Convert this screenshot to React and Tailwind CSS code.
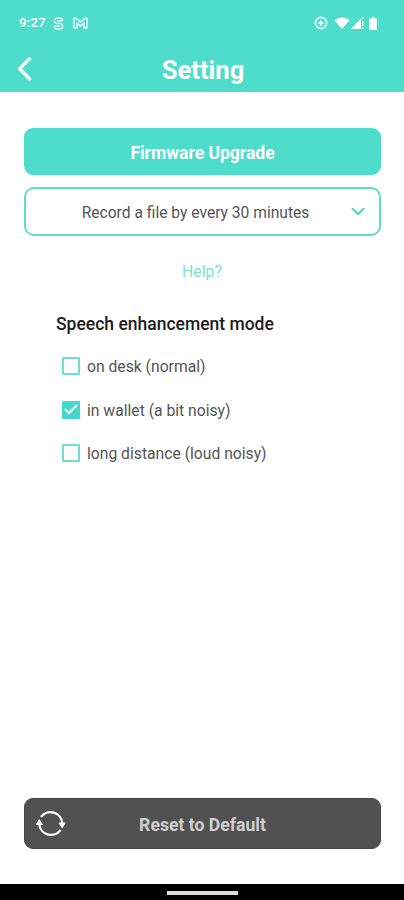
import React, { useState } from 'react';

const MODES = [
  { id: 'desk', label: 'on desk (normal)' },
  { id: 'wallet', label: 'in wallet (a bit noisy)' },
  { id: 'distance', label: 'long distance (loud noisy)' },
];

const StatusBar = () => (
  <div className="flex h-[46px] items-center justify-between pl-[19px] pr-[26px] text-white">
    <div className="flex items-center">
      <span className="w-[27px] whitespace-nowrap text-[13.5px] leading-none font-medium">9:27</span>
      <svg className="ml-[7px]" width="11" height="13" viewBox="0 0 11 13" fill="none" stroke="currentColor" strokeWidth="1.5" opacity="0.8">
        <path d="M9.500 4V3.500A2.500 2.500 0 0 0 7 1H4a2.500 2.500 0 0 0-2.500 2.500v.5A2.500 2.500 0 0 0 4 6.500h3A2.500 2.500 0 0 1 9.500 9v.5A2.500 2.500 0 0 1 7 12H4a2.500 2.500 0 0 1-2.500-2.500V9" />
        <path d="M4 4h5.500M1.500 9H7" strokeWidth="1.300" />
      </svg>
      <svg className="ml-[9px]" width="15" height="12" viewBox="0 0 15 12" fill="none" stroke="currentColor" strokeWidth="1.7" opacity="0.8">
        <path d="M1 10.800V1.400h2L7.500 5 12 1.400h2v9.400h-3V6.200L7.500 9 4 6.200v4.600z" strokeLinejoin="round" />
      </svg>
    </div>
    <div className="flex items-center">
      <svg className="mr-px" width="14" height="14" viewBox="0 0 14 14" fill="none" stroke="currentColor">
        <circle cx="7" cy="7" r="5.600" strokeWidth="1.700" opacity="0.85" />
        <path d="M7 4.300v5.400M4.300 7h5.400" strokeWidth="1.700" />
      </svg>
      <svg className="ml-[5px]" width="16" height="12" viewBox="0 0 16 12" fill="currentColor">
        <path d="M.5 3.200C4.800-.4 11.200-.4 15.500 3.200L8 12z" />
      </svg>
      <svg className="ml-px" width="13" height="12" viewBox="0 0 13 12" fill="currentColor">
        <path d="M0 12 10 1.500V12z" />
        <path d="M11 0h2v2h-2zM11 4h1.500v5H11zM11 10h1.500v2H11z" opacity="0.8" />
      </svg>
      <svg className="mr-px ml-[5px]" width="8" height="13" viewBox="0 0 8 13" fill="currentColor">
        <path d="M2.500 0h3v1.500H7a1 1 0 0 1 1 1V12a1 1 0 0 1-1 1H1a1 1 0 0 1-1-1V2.500a1 1 0 0 1 1-1h1.500z" />
      </svg>
    </div>
  </div>
);

const Header = () => (
  <header className="h-[92px] bg-[#4eddca]">
    <StatusBar />
    <div className="grid h-[46px] grid-cols-[60px_1fr_60px] items-center text-white">
      <button aria-label="Back" className="pl-[17px]">
        <svg width="16" height="24" viewBox="0 0 16 24" fill="none" stroke="currentColor" strokeWidth="3.4" strokeLinecap="round" strokeLinejoin="round">
          <path d="M12.500 1.900 2.600 11.700l9.900 10.100" />
        </svg>
      </button>
      <h1 className="pt-[3px] pl-0.5 text-center text-[25.6px] leading-none font-bold">Setting</h1>
    </div>
  </header>
);

const ModeOption = ({ label, checked, onToggle }) => (
  <button role="checkbox" aria-checked={checked} onClick={onToggle} className="flex h-[18px] items-center text-left">
    <span className={`flex size-[18px] items-center justify-center rounded-[1px] border-2 ${checked ? 'border-[#40d9cb] bg-[#40d9cb]' : 'border-[#6fdfcf] bg-white'}`}>
      {checked && (
        <svg className="shrink-0" width="14" height="11" viewBox="0 0 14 11" fill="none" stroke="white" strokeWidth="2">
          <path d="M1 5.200 4.900 9 13 1" />
        </svg>
      )}
    </span>
    <span className="ml-[7px] pt-0.5 whitespace-nowrap text-[15.7px] text-[#555]">{label}</span>
  </button>
);

const App = () => {
  const [mode, setMode] = useState('wallet');

  return (
    <div className="flex h-screen flex-col bg-white font-['Roboto',sans-serif]">
      <Header />

      <main className="flex flex-1 flex-col px-6 pt-[36px] pb-[35px]">
        <button className="mr-[-1px] h-[47px] rounded-[9px] bg-[#4eddca] pt-[3px] text-[17.5px] font-bold text-white">
          Firmware Upgrade
        </button>

        <button className="mt-3 mr-[-1px] grid h-[49px] grid-cols-[42px_1fr_56px] items-center rounded-[10px] border-2 border-[#62dcc6] bg-white text-[15.6px] text-[#555]">
          <span className="col-start-2 pt-1 whitespace-nowrap">Record a file by every 30 minutes</span>
          <svg className="ml-[28px]" width="14" height="9" viewBox="0 0 14 9" fill="none" stroke="#3fd6b8" strokeWidth="1.8">
            <path d="M1 1.200 7 7.200 13 1.200" />
          </svg>
        </button>

        <button className="mt-6 self-center text-[15.8px] leading-6 text-[#7ce3d3]">Help?</button>

        <section className="mt-[28px] pl-8">
          <h2 className="text-[17.5px] leading-6 font-medium text-[#1c1c1c]">Speech enhancement mode</h2>
          <div className="mt-[21px] flex flex-col items-start gap-[25.500px] pl-[6px]">
            {MODES.map((m) => (
              <ModeOption key={m.id} label={m.label} checked={mode === m.id} onToggle={() => setMode(m.id)} />
            ))}
          </div>
        </section>

        <button className="mt-auto mr-[-1px] grid h-[51px] grid-cols-[54px_1fr_54px] items-center rounded-[9px] border border-[#454746] bg-[#505251] text-[#cfcfcf]">
          <svg className="ml-[11px]" width="30" height="28" viewBox="0 0 30 28" fill="none" stroke="white" strokeWidth="2.2">
            <path d="M5 7A11.800 11.800 0 0 1 26.300 13" />
            <path d="M24.500 20A11.800 11.800 0 0 1 3.200 14" />
            <path d="m23.300 13 5.700 0-2.800 4.500zM.5 14.500l5.700 0-2.900-4.500z" fill="white" strokeWidth="1.200" strokeLinejoin="round" />
          </svg>
          <span className="pt-[3px] text-[17.6px] font-bold">Reset to Default</span>
        </button>
      </main>

      <footer className="flex h-4 items-center justify-center bg-black pt-0.5">
        <div className="h-1 w-[71px] bg-[#dcdcdc]" />
      </footer>
    </div>
  );
};

export default App;
